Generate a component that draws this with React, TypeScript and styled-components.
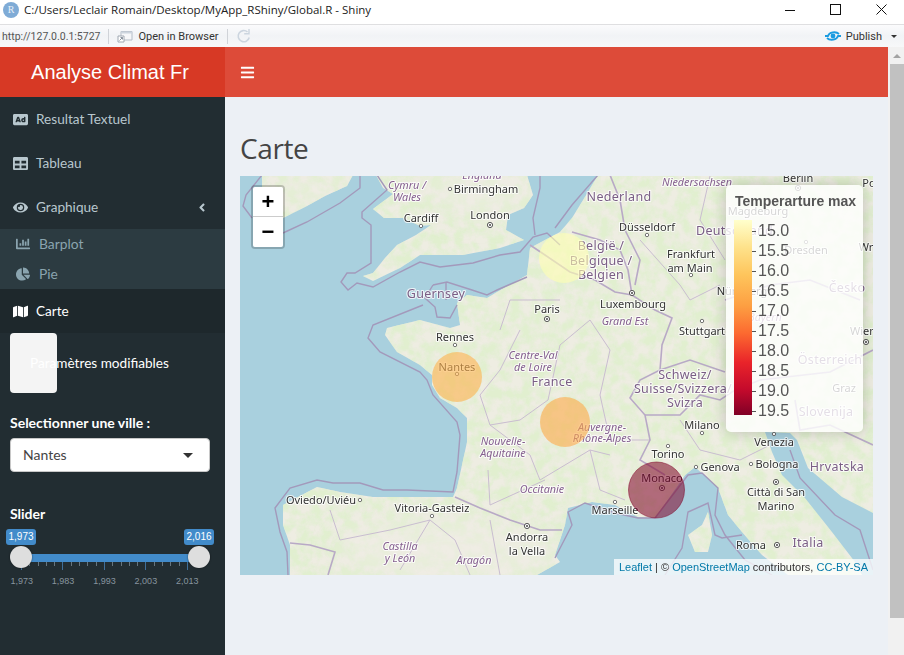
import React from "react";
import styled, { createGlobalStyle } from "styled-components";
import {
  FaAd,
  FaTable,
  FaEye,
  FaChartBar,
  FaChartPie,
  FaMap,
  FaBars,
  FaAngleLeft,
} from "react-icons/fa";

const GlobalStyle = createGlobalStyle`
  html, body {
    margin: 0;
    padding: 0;
    background: #fff;
    overflow: hidden;
  }
  * { box-sizing: border-box; }
`;

const SIDEBAR_FONT = `"Lato", "Open Sans", sans-serif`;
const WIN_FONT = `"Open Sans", "Noto Sans", sans-serif`;
const ARIAL = `"Liberation Sans", Arial, sans-serif`;

const Page = styled.div`
  width: 904px;
  height: 655px;
  display: flex;
  flex-direction: column;
  overflow: hidden;
`;

/* ---- window chrome ---- */
const TitleBar = styled.div`
  height: 25px;
  flex: none;
  display: flex;
  align-items: center;
  padding: 0 17px 7px 3px;
  background: #fff;
  border-bottom: 1px solid #dfdfe1;
  font: 11.5px ${WIN_FONT};
  color: #222;
`;
const TitleText = styled.span`
  margin-left: 5px;
  flex: 1;
  position: relative;
  top: 1px;
`;
const RLogo = styled.span`
  width: 16px;
  height: 16px;
  border-radius: 50%;
  background: #7fabd6;
  color: #e8f0f8;
  font: 10px "Liberation Serif", serif;
  display: flex;
  align-items: center;
  justify-content: center;
  position: relative;
  top: 1px;
`;
const WindowButtons = styled.div`
  display: flex;
  gap: 35px;
  align-items: center;
  position: relative;
  top: 1px;
`;
const Toolbar = styled.div`
  height: 22px;
  flex: none;
  display: flex;
  align-items: center;
  padding: 0 7px 0 2px;
  background: linear-gradient(#fbfbfc, #f1f3f6 50%, #f7f8f9);
  font: 11px Roboto, ${WIN_FONT};
  color: #333;
`;
const UrlText = styled.span`
  color: #555;
  font-size: 10.5px;
`;
const ToolSep = styled.span`
  width: 1px;
  height: 15px;
  background: #d0d3d8;
  margin: 0 8px;
`;
const ToolLabel = styled.span`
  margin-left: 5px;
`;
const Spacer = styled.span`
  flex: 1;
`;
const PublishText = styled.span`
  margin: 0 6px 0 5px;
`;
const SmallCaret = styled.span`
  width: 0;
  height: 0;
  margin-left: 3px;
  border-left: 3px solid transparent;
  border-right: 3px solid transparent;
  border-top: 3px solid #333;
`;

/* ---- dashboard ---- */
const Main = styled.div`
  flex: 1;
  display: flex;
  min-height: 0;
`;
const Dashboard = styled.div`
  flex: 1;
  display: grid;
  grid-template-columns: 225px 1fr;
  grid-template-rows: 50px 1fr;
  min-width: 0;
`;
const Logo = styled.div`
  background: #d73925;
  color: #fff;
  font: 20px ${ARIAL};
  display: flex;
  align-items: center;
  justify-content: center;
  padding-right: 5px;
`;
const TopNav = styled.div`
  background: #dd4b39;
  color: #fff;
  display: flex;
  align-items: center;
  padding-left: 15px;
  font-size: 15px;
`;
const Sidebar = styled.aside`
  background: #222d32;
  font: 14px ${SIDEBAR_FONT};
  color: #b8c7ce;
`;
const MenuItem = styled.div<{ $active?: boolean }>`
  height: 44px;
  display: flex;
  align-items: center;
  padding-left: 13px;
  gap: 8px;
  font-size: 13.6px;
  background: ${(p) => (p.$active ? "#1e282c" : "transparent")};
  color: ${(p) => (p.$active ? "#fff" : "#b8c7ce")};
  svg {
    width: 15px;
    height: 15px;
    flex: none;
  }
`;
const MenuLabel = styled.span`
  flex: 1;
`;
const Chevron = styled.span`
  margin-right: 18px;
  display: flex;
  svg {
    width: 10px;
    height: 13px;
  }
`;
const SubMenu = styled.div`
  background: #2c3b41;
  height: 60px;
`;
const SubItem = styled.div`
  height: 30px;
  display: flex;
  align-items: center;
  gap: 9px;
  padding: 0 0 1px 16px;
  color: #8aa4af;
  font-size: 13.8px;
  svg {
    width: 14px;
    height: 14px;
  }
`;
const ParamButton = styled.div`
  width: 47px;
  height: 60px;
  margin-left: 10px;
  padding: 0 0 0 20px;
  background: #f4f4f4;
  border-radius: 4px;
  color: #fff;
  font-size: 13.6px;
  white-space: nowrap;
  display: flex;
  align-items: center;
`;
const Field = styled.div<{ $top: number }>`
  padding: 0 10px;
  margin-top: ${(p) => p.$top}px;
`;
const FieldLabel = styled.div`
  color: #fff;
  font-weight: 700;
  height: 20px;
  line-height: 20px;
`;
const SelectBox = styled.div`
  margin-top: 5px;
  width: 200px;
  height: 34px;
  background: #fff;
  border: 1px solid #c8c8c8;
  border-radius: 4px;
  color: #444;
  padding: 0 12px 2px;
  display: flex;
  align-items: center;
  justify-content: space-between;
`;
const Caret = styled.span`
  width: 0;
  height: 0;
  margin: 2px 4px 0 0;
  border-left: 5px solid transparent;
  border-right: 5px solid transparent;
  border-top: 5px solid #333;
`;

/* ---- range slider ---- */
const Slider = styled.div`
  position: relative;
  height: 62px;
  margin: 5px 0 0 -4px;
  width: 208px;
`;
const ValueTag = styled.span<{ $right?: boolean }>`
  position: absolute;
  top: 0;
  ${(p) => (p.$right ? "right: 0;" : "left: 0;")}
  width: 30px;
  height: 16px;
  border-radius: 3px;
  background: #428bca;
  color: #fff;
  font: 10px/16px ${ARIAL};
  text-align: center;
`;
const Track = styled.div`
  position: absolute;
  top: 25px;
  left: 15px;
  width: 178px;
  height: 8px;
  background: #428bca;
`;
const Handle = styled.span<{ $right?: boolean }>`
  position: absolute;
  top: 17px;
  ${(p) => (p.$right ? "left: 182px;" : "left: 4px;")}
  width: 22px;
  height: 22px;
  border-radius: 50%;
  background: #dedede;
  box-shadow: 0 0 2px rgba(0, 0, 0, 0.6);
`;
const TickRow = styled.div`
  position: absolute;
  top: 33px;
  left: 15px;
  display: flex;
  gap: 7.3px;
`;
const Tick = styled.span<{ $major: boolean }>`
  width: 1px;
  height: ${(p) => (p.$major ? 8 : 4)}px;
  background: ${(p) => (p.$major ? "#3f6f9a" : "#66757f")};
`;
const TickLabels = styled.div`
  position: absolute;
  top: 46px;
  left: -5px;
  display: flex;
  font: 9px/12px ${ARIAL};
  color: #87949e;
`;
const TickLabel = styled.span`
  width: 41.5px;
  text-align: center;
  margin-left: -0.1px;
`;

/* ---- page body ---- */
const Content = styled.main`
  background: #ecf0f5;
  padding: 0 15px;
`;
const Heading = styled.h1`
  margin: 31px 0 8px;
  font: 400 28px/40px "Open Sans", sans-serif;
  color: #444;
  letter-spacing: -0.4px;
`;
const MapBox = styled.div`
  position: relative;
  width: 633px;
  height: 399px;
  background: #aad3df;
  overflow: hidden;
  svg.base {
    display: block;
  }
`;
const ZoomControl = styled.div`
  position: absolute;
  left: 11px;
  top: 9px;
  width: 34px;
  border: 2px solid rgba(0, 0, 0, 0.2);
  border-radius: 4px;
  background-clip: padding-box;
`;
const ZoomButton = styled.div<{ $first?: boolean }>`
  width: 30px;
  height: 30px;
  background: #fff;
  color: #000;
  font: 700 22px/30px ${ARIAL};
  text-align: center;
  border-radius: ${(p) => (p.$first ? "2px 2px 0 0" : "0 0 2px 2px")};
  border-bottom: ${(p) => (p.$first ? "1px solid #ccc" : "none")};
`;
const Legend = styled.div`
  position: absolute;
  left: 486px;
  top: 9px;
  width: 137px;
  height: 247px;
  padding: 8px 8px;
  background: rgba(255, 255, 255, 0.8);
  border-radius: 5px;
  box-shadow: 0 0 15px rgba(0, 0, 0, 0.2);
  font-family: ${ARIAL};
  color: #555;
`;
const LegendTitle = styled.div`
  font-size: 14px;
  font-weight: 700;
  line-height: 16px;
  margin-left: 1px;
  white-space: nowrap;
`;
const LegendBody = styled.div`
  display: flex;
  margin-top: 11px;
`;
const ColorBar = styled.div`
  width: 18px;
  height: 195px;
  background: linear-gradient(
    #ffffcc 0%,
    #fee28b 14%,
    #fec55c 28%,
    #fd9f42 44%,
    #fc6a30 58%,
    #e9242a 73%,
    #c40a2c 87%,
    #800026 100%
  );
`;
const LegendScale = styled.div`
  padding-top: 1px;
`;
const LegendRow = styled.div`
  height: 20px;
  display: flex;
  align-items: center;
  font-size: 16px;
  &::before {
    content: "";
    width: 4px;
    height: 1px;
    background: #555;
    margin-right: 2px;
  }
`;
const Attribution = styled.div`
  position: absolute;
  right: 0;
  bottom: 0;
  height: 16px;
  padding: 0 5px;
  background: rgba(255, 255, 255, 0.75);
  font: 11px/16px ${ARIAL};
  color: #333;
`;
const AttrLink = styled.span`
  color: #0078a8;
`;
const Scrollbar = styled.div`
  width: 16px;
  flex: none;
  background: #f1f1f1;
  display: flex;
  flex-direction: column;
  align-items: flex-end;
`;
const ScrollUp = styled.div`
  height: 17px;
  width: 14px;
  display: flex;
  justify-content: center;
  align-items: center;
  &::before {
    content: "";
    border-left: 4px solid transparent;
    border-right: 4px solid transparent;
    border-bottom: 4px solid #a3a3a3;
  }
`;
const ScrollThumb = styled.div`
  width: 14px;
  height: 554px;
  background: #c1c1c1;
`;

/* ---- map data, all in page coordinates ---- */
const pts = (p: number[][]) => p.map((q) => q.join(",")).join(" ");

const LAND: number[][][] = [
  // Ireland
  [[262, 175], [353, 175], [347, 186], [325, 196], [307, 206], [283, 218], [262, 222]],
  // Great Britain
  [[376, 175], [383, 188], [393, 194], [373, 209], [384, 218], [403, 218], [420, 226], [431, 225], [416, 235], [397, 245], [385, 258], [373, 273], [363, 276], [373, 281], [400, 268], [420, 255], [448, 255], [463, 255], [500, 248], [524, 240], [506, 230], [508, 215], [524, 208], [533, 195], [527, 175]],
  // Continent
  [[598, 175], [588, 192], [572, 218], [560, 232], [530, 248], [527, 275], [497, 292], [487, 298], [467, 295], [457, 303], [460, 325], [450, 328], [420, 320], [387, 328], [385, 335], [397, 352], [420, 365], [432, 375], [432, 385], [440, 398], [457, 408], [467, 418], [467, 442], [457, 488], [453, 497], [407, 497], [373, 497], [340, 492], [317, 487], [283, 505], [283, 525], [290, 545], [290, 575], [537, 575], [560, 562], [555, 555], [565, 525], [568, 508], [592, 502], [615, 505], [638, 517], [655, 518], [685, 475], [695, 467], [718, 488], [728, 515], [742, 532], [762, 555], [788, 575], [873, 575], [873, 175]],
  // Corsica
  [[688, 535], [702, 525], [708, 512], [712, 535], [708, 552], [695, 552]],
];

const ADRIATIC = [[772, 452], [765, 432], [790, 433], [797, 440], [808, 468], [842, 497], [873, 513], [873, 575], [862, 575], [855, 562], [832, 532], [805, 498], [782, 475]];

const MARITIME: number[][][] = [
  [[360, 175], [360, 188], [340, 203], [307, 222], [283, 233]],
  [[262, 175], [246, 195], [243, 206], [252, 218]],
  [[377, 175], [387, 190], [362, 212], [362, 218], [371, 225], [371, 263], [355, 273], [347, 273], [341, 282], [348, 290], [357, 283], [373, 287], [400, 272], [420, 262], [440, 267], [473, 263], [500, 255], [520, 252], [533, 237], [547, 233], [560, 245]],
  [[540, 175], [540, 188], [533, 218], [535, 235]],
  [[433, 285], [447, 282], [472, 290], [487, 295], [497, 290], [527, 277]],
  [[433, 285], [425, 298], [435, 307], [437, 317], [450, 318], [457, 305]],
  [[446, 282], [446, 300]],
  [[423, 305], [373, 325], [368, 338], [380, 352], [420, 372], [427, 380], [433, 395], [457, 422], [460, 435], [457, 472], [453, 492], [407, 490], [383, 490], [360, 483], [333, 483], [317, 480], [290, 488], [275, 508], [280, 532], [287, 552], [288, 575]],
  [[555, 558], [572, 525], [568, 512], [585, 503], [615, 513], [638, 518], [655, 518], [688, 475], [702, 473], [718, 488], [715, 515], [725, 535], [745, 560], [772, 575]],
  [[665, 575], [682, 548], [688, 512], [708, 503], [715, 535], [722, 538], [742, 535]],
  [[790, 450], [800, 478], [835, 515], [860, 530], [873, 570]],
  [[598, 175], [572, 205], [555, 228]],
];

const BORDERS: number[][][] = [
  [[530, 245], [545, 255], [570, 272], [595, 280], [615, 292], [632, 295], [655, 310], [672, 318], [662, 345], [660, 370], [640, 380], [630, 398], [645, 415], [650, 440], [640, 460], [665, 475]],
  [[572, 232], [600, 240], [620, 250], [628, 270], [632, 295]],
  [[610, 175], [620, 200], [625, 230], [640, 260], [635, 285]],
  [[455, 497], [480, 508], [510, 520], [540, 530], [562, 530]],
  [[290, 543], [310, 545], [335, 552], [328, 575]],
  [[645, 415], [680, 415], [700, 395], [720, 400], [735, 390], [760, 380], [830, 372], [873, 350]],
  [[795, 400], [800, 430], [830, 425], [873, 445]],
  [[660, 370], [690, 360], [725, 372]],
  [[725, 300], [770, 285], [810, 280], [860, 300]],
];

const REGIONS: number[][][] = [
  [[520, 330], [500, 370], [480, 395], [490, 425], [520, 420], [548, 400], [560, 345], [590, 320]],
  [[590, 320], [610, 350], [600, 395], [610, 440], [650, 440]],
  [[490, 425], [530, 455], [540, 480], [590, 450], [610, 455]],
  [[545, 480], [490, 505], [488, 470]],
  [[590, 450], [600, 490], [625, 500]],
  [[330, 510], [340, 540], [390, 530], [430, 520], [455, 540], [470, 575]],
  [[430, 520], [400, 570]],
  [[490, 520], [500, 575]],
  [[680, 420], [700, 450], [740, 460], [770, 445]],
  [[640, 240], [680, 285], [690, 300], [720, 285]],
  [[710, 176], [700, 220], [725, 260]],
  [[560, 300], [510, 300], [500, 330]],
];

type MapLabel = { x: number; y: number; t: string; k?: "city" | "country" | "region"; a?: "start" };

const LABELS: MapLabel[] = [
  { x: 482, y: 175, t: "England", k: "region" },
  { x: 486, y: 189, t: "Birmingham" },
  { x: 407, y: 185, t: "Cymru /", k: "region" },
  { x: 407, y: 197, t: "Wales", k: "region" },
  { x: 421, y: 218, t: "Cardiff" },
  { x: 490, y: 215, t: "London" },
  { x: 547, y: 309, t: "Paris" },
  { x: 436, y: 294, t: "Guernsey", k: "country" },
  { x: 455, y: 337, t: "Rennes" },
  { x: 457, y: 367, t: "Nantes" },
  { x: 533, y: 355, t: "Centre-Val", k: "region" },
  { x: 533, y: 367, t: "de Loire", k: "region" },
  { x: 552, y: 382, t: "France", k: "country" },
  { x: 503, y: 441, t: "Nouvelle-", k: "region" },
  { x: 503, y: 453, t: "Aquitaine", k: "region" },
  { x: 542, y: 489, t: "Occitanie", k: "region" },
  { x: 602, y: 427, t: "Auvergne-", k: "region" },
  { x: 602, y: 438, t: "Rhône-Alpes", k: "region" },
  { x: 321, y: 500, t: "Oviedo/Uviéu" },
  { x: 432, y: 508, t: "Vitoria-Gasteiz" },
  { x: 400, y: 546, t: "Castilla", k: "region" },
  { x: 400, y: 558, t: "y León", k: "region" },
  { x: 474, y: 560, t: "Aragón", k: "region" },
  { x: 527, y: 537, t: "Andorra" },
  { x: 527, y: 551, t: "la Vella" },
  { x: 615, y: 510, t: "Marseille" },
  { x: 662, y: 478, t: "Monaco" },
  { x: 668, y: 454, t: "Torino" },
  { x: 702, y: 425, t: "Milano" },
  { x: 720, y: 467, t: "Genova" },
  { x: 777, y: 464, t: "Bologna" },
  { x: 774, y: 442, t: "Venezia" },
  { x: 776, y: 492, t: "Città di San" },
  { x: 776, y: 506, t: "Marino" },
  { x: 751, y: 545, t: "Roma" },
  { x: 808, y: 543, t: "Italia", k: "country" },
  { x: 837, y: 467, t: "Hrvatska", k: "country" },
  { x: 685, y: 375, t: "Schweiz/", k: "country" },
  { x: 683, y: 389, t: "Suisse/Svizzera/", k: "country" },
  { x: 685, y: 403, t: "Svizra", k: "country" },
  { x: 619, y: 197, t: "Nederland", k: "country" },
  { x: 647, y: 227, t: "Düsseldorf" },
  { x: 696, y: 231, t: "Deutschland", k: "country", a: "start" },
  { x: 758, y: 211, t: "Magdeburg" },
  { x: 697, y: 182, t: "Niedersachsen", k: "region" },
  { x: 798, y: 178, t: "Berlin" },
  { x: 601, y: 246, t: "België /", k: "country" },
  { x: 601, y: 261, t: "Belgique /", k: "country" },
  { x: 601, y: 275, t: "Belgien", k: "country" },
  { x: 691, y: 254, t: "Frankfurt" },
  { x: 690, y: 268, t: "am Main" },
  { x: 633, y: 304, t: "Luxembourg" },
  { x: 625, y: 321, t: "Grand Est", k: "region" },
  { x: 702, y: 331, t: "Stuttgart" },
  { x: 742, y: 291, t: "Nürnberg" },
  { x: 806, y: 250, t: "Dresden" },
  { x: 847, y: 288, t: "Česko", k: "country" },
  { x: 765, y: 317, t: "Bayern", k: "region" },
  { x: 863, y: 331, t: "Wien" },
  { x: 830, y: 360, t: "Österreich", k: "country" },
  { x: 826, y: 412, t: "Slovenija", k: "country" },
  { x: 844, y: 388, t: "Graz" },
  { x: 869, y: 183, t: "Po" },
  { x: 866, y: 247, t: "Wr" },
];

const SMALL_DOTS = [[421, 226], [455, 345], [457, 374], [360, 500], [432, 516], [615, 502], [668, 446], [702, 433], [696, 467], [751, 464], [774, 434], [647, 235], [691, 275], [702, 321], [806, 242], [450, 189]];
const CAPITALS = [[490, 225], [547, 319], [527, 526], [662, 488], [776, 482], [777, 545], [632, 293], [798, 188], [866, 342]];

const MapText = styled.text<{ $kind?: string }>`
  font-family: "Noto Sans", "Open Sans", sans-serif;
  font-size: ${(p) => (p.$kind === "country" ? 12.5 : p.$kind === "region" ? 10.8 : 11)}px;
  font-style: ${(p) => (p.$kind === "region" ? "italic" : "normal")};
  letter-spacing: ${(p) => (p.$kind === "country" ? 0.3 : 0)}px;
  fill: ${(p) => (p.$kind === "country" ? "#7a5e85" : p.$kind === "region" ? "#85608f" : "#333")};
  stroke: rgba(255, 255, 255, 0.75);
  stroke-width: 2.2px;
  paint-order: stroke;
  stroke-linejoin: round;
`;

const BaseMap = () => (
  <svg className="base" width="633" height="399" viewBox="240 176 633 399">
    <defs>
      <clipPath id="land">
        {LAND.map((p, i) => (
          <polygon key={i} points={pts(p)} />
        ))}
      </clipPath>
      <filter id="mottle" x="0" y="0" width="100%" height="100%">
        <feTurbulence type="fractalNoise" baseFrequency="0.09" numOctaves="4" seed="11" />
        <feColorMatrix
          type="matrix"
          values="0 0 0 0 0.74  0 0 0 0 0.86  0 0 0 0 0.62  0 0 0 3 -1"
        />
      </filter>
      <filter id="soft">
        <feGaussianBlur stdDeviation="14" />
      </filter>
    </defs>
    <rect x="240" y="176" width="633" height="399" fill="#a9d0de" />
    <g clipPath="url(#land)">
      <rect x="240" y="176" width="633" height="399" fill="#eeede2" />
      <rect x="240" y="176" width="633" height="399" filter="url(#mottle)" opacity="0.9" />
      <g filter="url(#soft)" fill="#f0ede6">
        <ellipse cx="450" cy="550" rx="110" ry="30" opacity="0.6" />
        <ellipse cx="480" cy="190" rx="50" ry="22" opacity="0.6" />
        <ellipse cx="310" cy="190" rx="50" ry="14" opacity="0.5" />
      </g>
    </g>
    <polygon points={pts(ADRIATIC)} fill="#a9d0de" />
    {REGIONS.map((p, i) => (
      <polyline key={i} points={pts(p)} fill="none" stroke="#c9bdd0" strokeWidth="1" />
    ))}
    {BORDERS.map((p, i) => (
      <polyline key={i} points={pts(p)} fill="none" stroke="#b8a9c6" strokeWidth="1.6" />
    ))}
    {MARITIME.map((p, i) => (
      <polyline key={i} points={pts(p)} fill="none" stroke="#a399bb" strokeWidth="1.4" />
    ))}
    {SMALL_DOTS.map(([x, y], i) => (
      <circle key={i} cx={x} cy={y} r="1.7" fill="#fff" stroke="#555" strokeWidth="0.8" />
    ))}
    {CAPITALS.map(([x, y], i) => (
      <g key={i}>
        <circle cx={x} cy={y} r="2.6" fill="#fff" stroke="#444" strokeWidth="0.9" />
        <circle cx={x} cy={y} r="1" fill="#444" />
      </g>
    ))}
    {LABELS.map((l) => (
      <MapText key={l.t} x={l.x} y={l.y + 4} textAnchor={l.a ?? "middle"} $kind={l.k}>
        {l.t}
      </MapText>
    ))}
    <circle cx="564" cy="258" r="25" fill="#ffffb2" fillOpacity="0.6" />
    <circle cx="457" cy="377" r="25" fill="#feb24c" fillOpacity="0.6" />
    <circle cx="565" cy="422" r="25" fill="#fdaa48" fillOpacity="0.6" />
    <circle cx="656.5" cy="490" r="28" fill="#800026" fillOpacity="0.55" stroke="#800026" strokeOpacity="0.5" />
  </svg>
);

const PublishIcon = () => (
  <svg width="16" height="12" viewBox="0 0 16 12">
    <path d="M0 6 H3 C4 2 11 1 14 4" fill="none" stroke="#1a9be0" strokeWidth="1.8" />
    <path d="M16 6 H13 C12 10 5 11 2 8" fill="none" stroke="#1a9be0" strokeWidth="1.8" />
    <circle cx="8" cy="6" r="2.4" fill="#1a9be0" />
  </svg>
);

const BrowserIcon = () => (
  <svg width="16" height="14" viewBox="0 0 16 14">
    <path d="M4 2.5 H15 V11 H4 Z" fill="#f6f7f9" stroke="#b4bcc6" />
    <path d="M4 2.5 H15 V4.5 H4 Z" fill="#cdd5de" />
    <path d="M1 7 H7 V13 H1 Z" fill="#fff" stroke="#a0a8b2" />
    <path d="M2.5 11.5 L5.5 8.5 M3.5 8.5 H5.5 V10.5" fill="none" stroke="#8a949f" />
  </svg>
);

const ReloadIcon = () => (
  <svg width="15" height="16" viewBox="0 0 15 16">
    <path d="M11.5 4 A5.6 5.6 0 1 0 13.2 9.5" fill="none" stroke="#ccd5df" strokeWidth="1.6" />
    <path d="M8.2 5.8 H13 V1" fill="none" stroke="#ccd5df" strokeWidth="1.4" />
  </svg>
);

const WindowIcons = () => (
  <WindowButtons>
    <svg width="10" height="10" viewBox="0 0 10 10">
      <path d="M0 5.5 H10" stroke="#111" strokeWidth="1" />
    </svg>
    <svg width="11" height="11" viewBox="0 0 11 11">
      <rect x="0.5" y="0.5" width="10" height="10" fill="none" stroke="#111" />
    </svg>
    <svg width="11" height="11" viewBox="0 0 11 11">
      <path d="M0.5 0.5 L10.5 10.5 M10.5 0.5 L0.5 10.5" stroke="#111" />
    </svg>
  </WindowButtons>
);

const LEGEND_VALUES = ["15.0", "15.5", "16.0", "16.5", "17.0", "17.5", "18.0", "18.5", "19.0", "19.5"];
const TICKS = Array.from({ length: 22 }, (_, i) => i);
const TICK_LABELS = ["1,973", "1,983", "1,993", "2,003", "2,013"];

const App: React.FC = () => {
  return (
    <Page>
      <GlobalStyle />
      <TitleBar>
        <RLogo>R</RLogo>
        <TitleText>C:/Users/Leclair Romain/Desktop/MyApp_RShiny/Global.R - Shiny</TitleText>
        <WindowIcons />
      </TitleBar>
      <Toolbar>
        <UrlText>http://127.0.0.1:5727</UrlText>
        <ToolSep />
        <BrowserIcon />
        <ToolLabel>Open in Browser</ToolLabel>
        <ToolSep />
        <ReloadIcon />
        <Spacer />
        <PublishIcon />
        <PublishText>Publish</PublishText>
        <SmallCaret />
      </Toolbar>
      <Main>
        <Dashboard>
          <Logo>Analyse Climat Fr</Logo>
          <TopNav>
            <FaBars />
          </TopNav>
          <Sidebar>
            <MenuItem>
              <FaAd />
              <MenuLabel>Resultat Textuel</MenuLabel>
            </MenuItem>
            <MenuItem>
              <FaTable />
              <MenuLabel>Tableau</MenuLabel>
            </MenuItem>
            <MenuItem>
              <FaEye />
              <MenuLabel>Graphique</MenuLabel>
              <Chevron>
                <FaAngleLeft />
              </Chevron>
            </MenuItem>
            <SubMenu>
              <SubItem>
                <FaChartBar />
                Barplot
              </SubItem>
              <SubItem>
                <FaChartPie />
                Pie
              </SubItem>
            </SubMenu>
            <MenuItem $active>
              <FaMap />
              <MenuLabel>Carte</MenuLabel>
            </MenuItem>
            <ParamButton>Paramètres modifiables</ParamButton>
            <Field $top={20}>
              <FieldLabel>Selectionner une ville :</FieldLabel>
              <SelectBox>
                Nantes
                <Caret />
              </SelectBox>
            </Field>
            <Field $top={32}>
              <FieldLabel>Slider</FieldLabel>
              <Slider>
                <ValueTag>1,973</ValueTag>
                <ValueTag $right>2,016</ValueTag>
                <Track />
                <TickRow>
                  {TICKS.map((i) => (
                    <Tick key={i} $major={i % 5 === 0} />
                  ))}
                </TickRow>
                <Handle />
                <Handle $right />
                <TickLabels>
                  {TICK_LABELS.map((t) => (
                    <TickLabel key={t}>{t}</TickLabel>
                  ))}
                </TickLabels>
              </Slider>
            </Field>
          </Sidebar>
          <Content>
            <Heading>Carte</Heading>
            <MapBox>
              <BaseMap />
              <ZoomControl>
                <ZoomButton $first>+</ZoomButton>
                <ZoomButton>−</ZoomButton>
              </ZoomControl>
              <Legend>
                <LegendTitle>Temperarture max</LegendTitle>
                <LegendBody>
                  <ColorBar />
                  <LegendScale>
                    {LEGEND_VALUES.map((v) => (
                      <LegendRow key={v}>{v}</LegendRow>
                    ))}
                  </LegendScale>
                </LegendBody>
              </Legend>
              <Attribution>
                <AttrLink>Leaflet</AttrLink> | © <AttrLink>OpenStreetMap</AttrLink> contributors,{" "}
                <AttrLink>CC-BY-SA</AttrLink>
              </Attribution>
            </MapBox>
          </Content>
        </Dashboard>
        <Scrollbar>
          <ScrollUp />
          <ScrollThumb />
        </Scrollbar>
      </Main>
    </Page>
  );
};

export default App;
